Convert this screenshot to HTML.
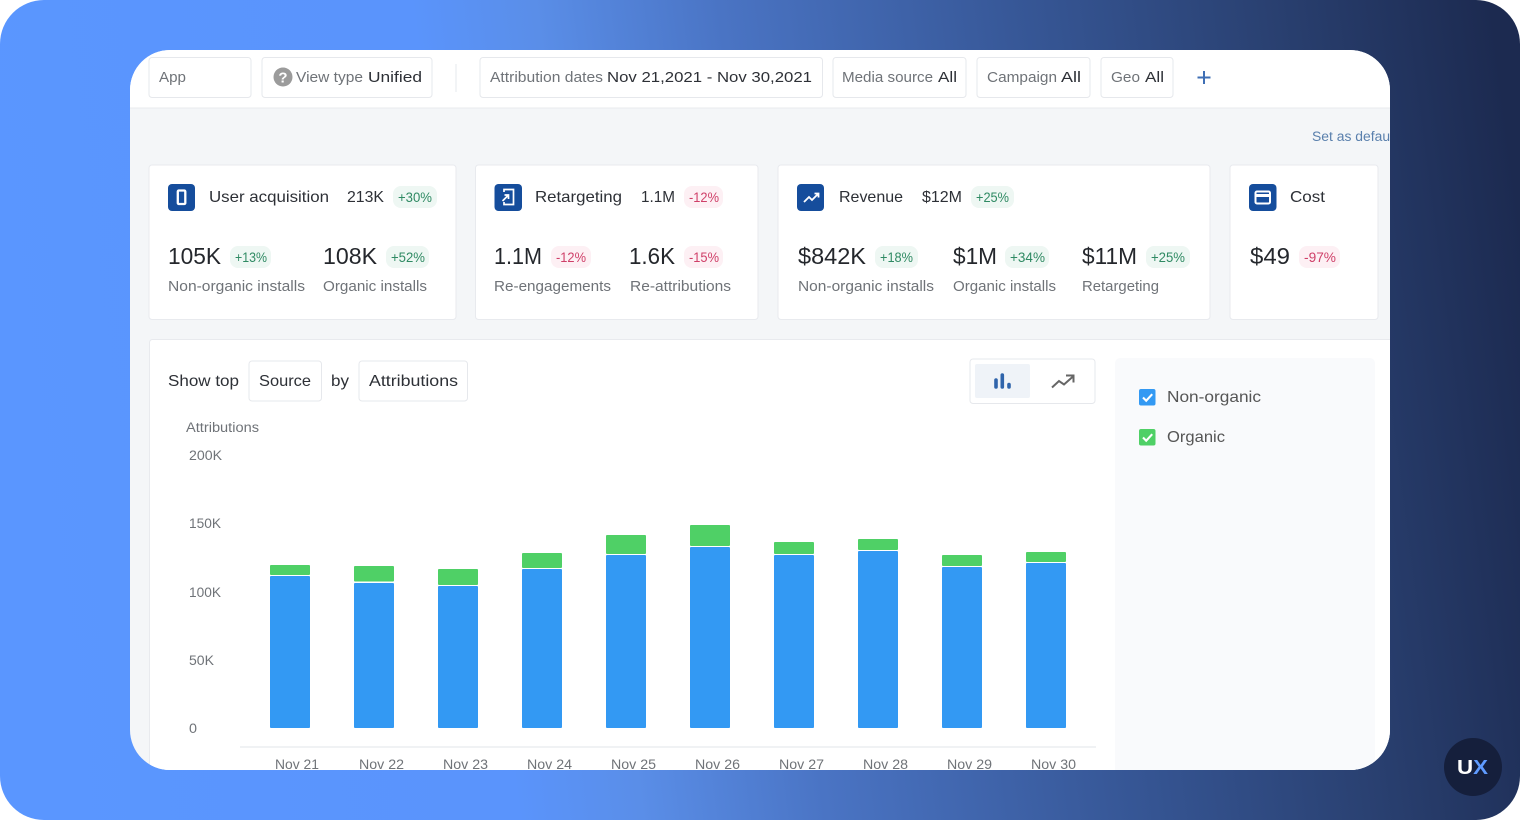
<!DOCTYPE html>
<html><head><meta charset="utf-8">
<style>
html,body{margin:0;padding:0;background:#fff;width:1520px;height:820px;overflow:hidden}
svg{display:block}
text{font-family:"Liberation Sans",sans-serif;white-space:pre}
.g{fill:#6f7378}.d{fill:#2d3036}
.t{font-size:15px}.h{font-size:16px}.v{font-size:23px;fill:#24272c}.l{font-size:14.5px;fill:#6f7378}
.b{font-size:13.5px}.pos{fill:#2f8a63}.neg{fill:#cf3f68}
.pb{fill:#eef7f3}.nb{fill:#fdf0f4}
.box{fill:#fff;stroke:#e6e8ec;stroke-width:1}
.card{fill:#fff;stroke:#e8eaee;stroke-width:1}
.ic{fill:#154d9c}
.blue{fill:#3399f3}.green{fill:#4fd066}
</style></head><body>
<svg xmlns="http://www.w3.org/2000/svg" width="1520" height="820" viewBox="0 0 1520 820">
<defs>
<linearGradient id="bg" gradientUnits="userSpaceOnUse" x1="0" y1="410" x2="1520" y2="210">
<stop offset="0" stop-color="#5a96ff"/><stop offset=".3" stop-color="#5a94fc"/><stop offset=".38" stop-color="#5a8ee8"/><stop offset=".5" stop-color="#4a74c4"/><stop offset=".7" stop-color="#365695"/><stop offset=".85" stop-color="#2a4172"/><stop offset="1" stop-color="#1c2a50"/>
</linearGradient>
<clipPath id="panel"><rect x="130" y="50" width="1260" height="720" rx="40"/></clipPath>
</defs>
<rect width="1520" height="820" rx="44" fill="url(#bg)"/>
<g clip-path="url(#panel)">
<rect x="130" y="50" width="1260" height="720" fill="#f4f6f8"/>
<rect x="130" y="50" width="1260" height="58" fill="#fff"/>
<rect x="130" y="107.500" width="1260" height="1" fill="#e9ebee"/>

<rect class="box" x="149" y="57.500" width="102" height="40" rx="3"/>
<rect class="box" x="262" y="57.500" width="170" height="40" rx="3"/>
<rect x="455.500" y="64" width="1" height="28" fill="#e6e8ec"/>
<rect class="box" x="480" y="57.500" width="342.500" height="40" rx="3"/>
<rect class="box" x="833" y="57.500" width="133" height="40" rx="3"/>
<rect class="box" x="977" y="57.500" width="113" height="40" rx="3"/>
<rect class="box" x="1101" y="57.500" width="72" height="40" rx="3"/>

<text class="t g" x="159" y="82" textLength="27" lengthAdjust="spacingAndGlyphs">App</text>
<circle cx="283" cy="77" r="9.500" fill="#9b9b9b"/>
<text x="283" y="82.500" text-anchor="middle" style="font-size:15px;font-weight:bold;fill:#fff">?</text>
<text class="t g" x="296" y="82" textLength="67" lengthAdjust="spacingAndGlyphs">View type</text>
<text class="t d" x="368" y="82" textLength="54" lengthAdjust="spacingAndGlyphs">Unified</text>
<text class="t g" x="490" y="82" textLength="113" lengthAdjust="spacingAndGlyphs">Attribution dates</text>
<text class="t d" x="607" y="82" textLength="205" lengthAdjust="spacingAndGlyphs">Nov 21,2021 - Nov 30,2021</text>
<text class="t g" x="842" y="82" textLength="91" lengthAdjust="spacingAndGlyphs">Media source</text>
<text class="t d" x="938" y="82" textLength="19" lengthAdjust="spacingAndGlyphs">All</text>
<text class="t g" x="987" y="82" textLength="70" lengthAdjust="spacingAndGlyphs">Campaign</text>
<text class="t d" x="1061" y="82" textLength="20" lengthAdjust="spacingAndGlyphs">All</text>
<text class="t g" x="1111" y="82" textLength="29" lengthAdjust="spacingAndGlyphs">Geo</text>
<text class="t d" x="1145" y="82" textLength="19" lengthAdjust="spacingAndGlyphs">All</text>
<path d="M1204 71v13M1197.500 77.500h13" stroke="#3f6fb5" stroke-width="2" fill="none"/>

<text x="1312" y="141" textLength="85" lengthAdjust="spacingAndGlyphs" style="font-size:13.500px;fill:#5a80ad">Set as default</text>

<rect class="card" x="149" y="165" width="307" height="154.500" rx="3"/>
<rect class="card" x="475.500" y="165" width="282.500" height="154.500" rx="3"/>
<rect class="card" x="778" y="165" width="432" height="154.500" rx="3"/>
<rect class="card" x="1230" y="165" width="148" height="154.500" rx="3"/>

<rect class="ic" x="168" y="184" width="27" height="27" rx="4"/>
<rect x="177.800" y="190.500" width="7.500" height="13.500" rx="1" fill="none" stroke="#fff" stroke-width="2.300"/>
<rect class="ic" x="494.500" y="184" width="27.500" height="27" rx="4"/>
<path d="M504 192v-2.500h9.500v15H504V202" fill="none" stroke="#fff" stroke-width="1.700"/>
<path d="M502.500 201l6-6M504.500 195h4v4" fill="none" stroke="#fff" stroke-width="1.700"/>
<rect class="ic" x="797" y="184" width="27" height="27" rx="4"/>
<path d="M804 202l5-5 3 3 6-6M814.500 193.500h4v4" fill="none" stroke="#fff" stroke-width="1.800"/>
<rect class="ic" x="1249" y="184" width="27.500" height="27" rx="4"/>
<rect x="1255.500" y="191.500" width="14.500" height="12" rx="1.500" fill="none" stroke="#fff" stroke-width="2"/>
<rect x="1255.500" y="194" width="14.500" height="3" fill="#fff"/>

<text class="h d" x="209" y="202" textLength="120" lengthAdjust="spacingAndGlyphs">User acquisition</text>
<text class="h d" x="347" y="202" textLength="37" lengthAdjust="spacingAndGlyphs">213K</text>
<rect class="pb" x="393" y="186" width="44" height="22" rx="8"/>
<text class="b pos" x="398" y="202" textLength="34" lengthAdjust="spacingAndGlyphs">+30%</text>
<text class="h d" x="535" y="202" textLength="87" lengthAdjust="spacingAndGlyphs">Retargeting</text>
<text class="h d" x="641" y="202" textLength="34" lengthAdjust="spacingAndGlyphs">1.1M</text>
<rect class="nb" x="684" y="186" width="39" height="22" rx="8"/>
<text class="b neg" x="689" y="202" textLength="30" lengthAdjust="spacingAndGlyphs">-12%</text>
<text class="h d" x="839" y="202" textLength="64" lengthAdjust="spacingAndGlyphs">Revenue</text>
<text class="h d" x="922" y="202" textLength="40" lengthAdjust="spacingAndGlyphs">$12M</text>
<rect class="pb" x="971" y="186" width="43" height="22" rx="8"/>
<text class="b pos" x="976" y="202" textLength="33" lengthAdjust="spacingAndGlyphs">+25%</text>
<text class="h d" x="1290" y="202" textLength="35" lengthAdjust="spacingAndGlyphs">Cost</text>

<text class="v" x="168" y="264" textLength="53" lengthAdjust="spacingAndGlyphs">105K</text>
<rect class="pb" x="230" y="246" width="41" height="22" rx="8"/>
<text class="b pos" x="235" y="262" textLength="32" lengthAdjust="spacingAndGlyphs">+13%</text>
<text class="v" x="323" y="264" textLength="54" lengthAdjust="spacingAndGlyphs">108K</text>
<rect class="pb" x="386" y="246" width="43" height="22" rx="8"/>
<text class="b pos" x="391" y="262" textLength="34" lengthAdjust="spacingAndGlyphs">+52%</text>
<text class="v" x="494" y="264" textLength="48" lengthAdjust="spacingAndGlyphs">1.1M</text>
<rect class="nb" x="551" y="246" width="40" height="22" rx="8"/>
<text class="b neg" x="556" y="262" textLength="30" lengthAdjust="spacingAndGlyphs">-12%</text>
<text class="v" x="629" y="264" textLength="46" lengthAdjust="spacingAndGlyphs">1.6K</text>
<rect class="nb" x="684" y="246" width="39" height="22" rx="8"/>
<text class="b neg" x="689" y="262" textLength="30" lengthAdjust="spacingAndGlyphs">-15%</text>
<text class="v" x="798" y="264" textLength="68" lengthAdjust="spacingAndGlyphs">$842K</text>
<rect class="pb" x="875" y="246" width="43" height="22" rx="8"/>
<text class="b pos" x="880" y="262" textLength="33" lengthAdjust="spacingAndGlyphs">+18%</text>
<text class="v" x="953" y="264" textLength="44" lengthAdjust="spacingAndGlyphs">$1M</text>
<rect class="pb" x="1005" y="246" width="44" height="22" rx="8"/>
<text class="b pos" x="1010" y="262" textLength="35" lengthAdjust="spacingAndGlyphs">+34%</text>
<text class="v" x="1082" y="264" textLength="55" lengthAdjust="spacingAndGlyphs">$11M</text>
<rect class="pb" x="1146" y="246" width="44" height="22" rx="8"/>
<text class="b pos" x="1151" y="262" textLength="34" lengthAdjust="spacingAndGlyphs">+25%</text>
<text class="v" x="1250" y="264" textLength="40" lengthAdjust="spacingAndGlyphs">$49</text>
<rect class="nb" x="1299" y="246" width="41" height="22" rx="8"/>
<text class="b neg" x="1304" y="262" textLength="32" lengthAdjust="spacingAndGlyphs">-97%</text>

<text class="l" x="168" y="291" textLength="137" lengthAdjust="spacingAndGlyphs">Non-organic installs</text>
<text class="l" x="323" y="291" textLength="104" lengthAdjust="spacingAndGlyphs">Organic installs</text>
<text class="l" x="494" y="291" textLength="117" lengthAdjust="spacingAndGlyphs">Re-engagements</text>
<text class="l" x="630" y="291" textLength="101" lengthAdjust="spacingAndGlyphs">Re-attributions</text>
<text class="l" x="798" y="291" textLength="136" lengthAdjust="spacingAndGlyphs">Non-organic installs</text>
<text class="l" x="953" y="291" textLength="103" lengthAdjust="spacingAndGlyphs">Organic installs</text>
<text class="l" x="1082" y="291" textLength="77" lengthAdjust="spacingAndGlyphs">Retargeting</text>

<rect x="149.500" y="339.500" width="1300" height="500" fill="#fff" stroke="#e8eaee" rx="3"/>
<rect x="1115" y="358" width="260" height="450" rx="5" fill="#f9fafc"/>

<text class="t d" x="168" y="386" textLength="71" lengthAdjust="spacingAndGlyphs" style="font-size:16px">Show top</text>
<rect class="box" x="249" y="361" width="72.500" height="40" rx="3"/>
<text class="h d" x="259" y="386" textLength="52" lengthAdjust="spacingAndGlyphs">Source</text>
<text class="h d" x="331" y="386" textLength="18" lengthAdjust="spacingAndGlyphs">by</text>
<rect class="box" x="359" y="361" width="108.500" height="40" rx="3"/>
<text class="h d" x="369" y="386" textLength="89" lengthAdjust="spacingAndGlyphs">Attributions</text>

<rect class="box" x="970" y="359" width="125" height="44.500" rx="3"/>
<rect x="975" y="364" width="55" height="34" rx="2" fill="#eff3f8"/>
<path d="M996 380v7M1002.300 375v12M1009 384.500v2.500" stroke="#2f64ab" stroke-width="3.600" stroke-linecap="round" fill="none"/>
<path d="M1052 387.500l7-6.500 5 3.500 9-8M1066 375.500h7.500v7" fill="none" stroke="#666" stroke-width="2"/>

<rect class="blue" x="1139" y="389" width="16.500" height="16.500" rx="2"/>
<path d="M1143 397.500l3.200 3.200 6-6.500" fill="none" stroke="#fff" stroke-width="2.100"/>
<text class="h" x="1167" y="402" textLength="94" lengthAdjust="spacingAndGlyphs" style="fill:#555">Non-organic</text>
<rect class="green" x="1139" y="429" width="16.500" height="16.500" rx="2"/>
<path d="M1143 437.500l3.200 3.200 6-6.500" fill="none" stroke="#fff" stroke-width="2.100"/>
<text class="h" x="1167" y="442" textLength="58" lengthAdjust="spacingAndGlyphs" style="fill:#555">Organic</text>

<text class="g" x="186" y="432" textLength="73" lengthAdjust="spacingAndGlyphs" style="font-size:13.500px">Attributions</text>
<g style="font-size:14px" class="g">
<text x="189" y="460" textLength="33" lengthAdjust="spacingAndGlyphs">200K</text>
<text x="189" y="528" textLength="32" lengthAdjust="spacingAndGlyphs">150K</text>
<text x="189" y="597" textLength="32" lengthAdjust="spacingAndGlyphs">100K</text>
<text x="189" y="665" textLength="25" lengthAdjust="spacingAndGlyphs">50K</text>
<text x="189" y="733" textLength="8" lengthAdjust="spacingAndGlyphs">0</text>
</g>

<g class="green">
<rect x="270" y="565" width="40" height="10" rx="1"/>
<rect x="354" y="566" width="40" height="15.500" rx="1"/>
<rect x="438" y="569" width="40" height="16" rx="1"/>
<rect x="522" y="553" width="40" height="15" rx="1"/>
<rect x="606" y="535" width="40" height="19" rx="1"/>
<rect x="690" y="525" width="40" height="21" rx="1"/>
<rect x="774" y="542" width="40" height="12" rx="1"/>
<rect x="858" y="539" width="40" height="11" rx="1"/>
<rect x="942" y="555" width="40" height="11" rx="1"/>
<rect x="1026" y="552" width="40" height="10" rx="1"/>
</g>
<g class="blue">
<rect x="270" y="576" width="40" height="152" rx="1"/>
<rect x="354" y="583" width="40" height="145" rx="1"/>
<rect x="438" y="586" width="40" height="142" rx="1"/>
<rect x="522" y="569" width="40" height="159" rx="1"/>
<rect x="606" y="555" width="40" height="173" rx="1"/>
<rect x="690" y="547" width="40" height="181" rx="1"/>
<rect x="774" y="555" width="40" height="173" rx="1"/>
<rect x="858" y="551" width="40" height="177" rx="1"/>
<rect x="942" y="567" width="40" height="161" rx="1"/>
<rect x="1026" y="563" width="40" height="165" rx="1"/>
</g>
<rect x="240" y="746.500" width="856" height="1" fill="#e2e4e8"/>
<g style="font-size:14px" class="g">
<text x="275" y="769" textLength="44" lengthAdjust="spacingAndGlyphs">Nov 21</text>
<text x="359" y="769" textLength="45" lengthAdjust="spacingAndGlyphs">Nov 22</text>
<text x="443" y="769" textLength="45" lengthAdjust="spacingAndGlyphs">Nov 23</text>
<text x="527" y="769" textLength="45" lengthAdjust="spacingAndGlyphs">Nov 24</text>
<text x="611" y="769" textLength="45" lengthAdjust="spacingAndGlyphs">Nov 25</text>
<text x="695" y="769" textLength="45" lengthAdjust="spacingAndGlyphs">Nov 26</text>
<text x="779" y="769" textLength="45" lengthAdjust="spacingAndGlyphs">Nov 27</text>
<text x="863" y="769" textLength="45" lengthAdjust="spacingAndGlyphs">Nov 28</text>
<text x="947" y="769" textLength="45" lengthAdjust="spacingAndGlyphs">Nov 29</text>
<text x="1031" y="769" textLength="45" lengthAdjust="spacingAndGlyphs">Nov 30</text>
</g>
</g>
<circle cx="1473" cy="767" r="29" fill="#151f3c"/>
<text x="1457" y="774" textLength="31" lengthAdjust="spacingAndGlyphs" style="font-size:20px;font-weight:bold;fill:#fff">U<tspan fill="#5f9bff">X</tspan></text>
</svg>
</body></html>
